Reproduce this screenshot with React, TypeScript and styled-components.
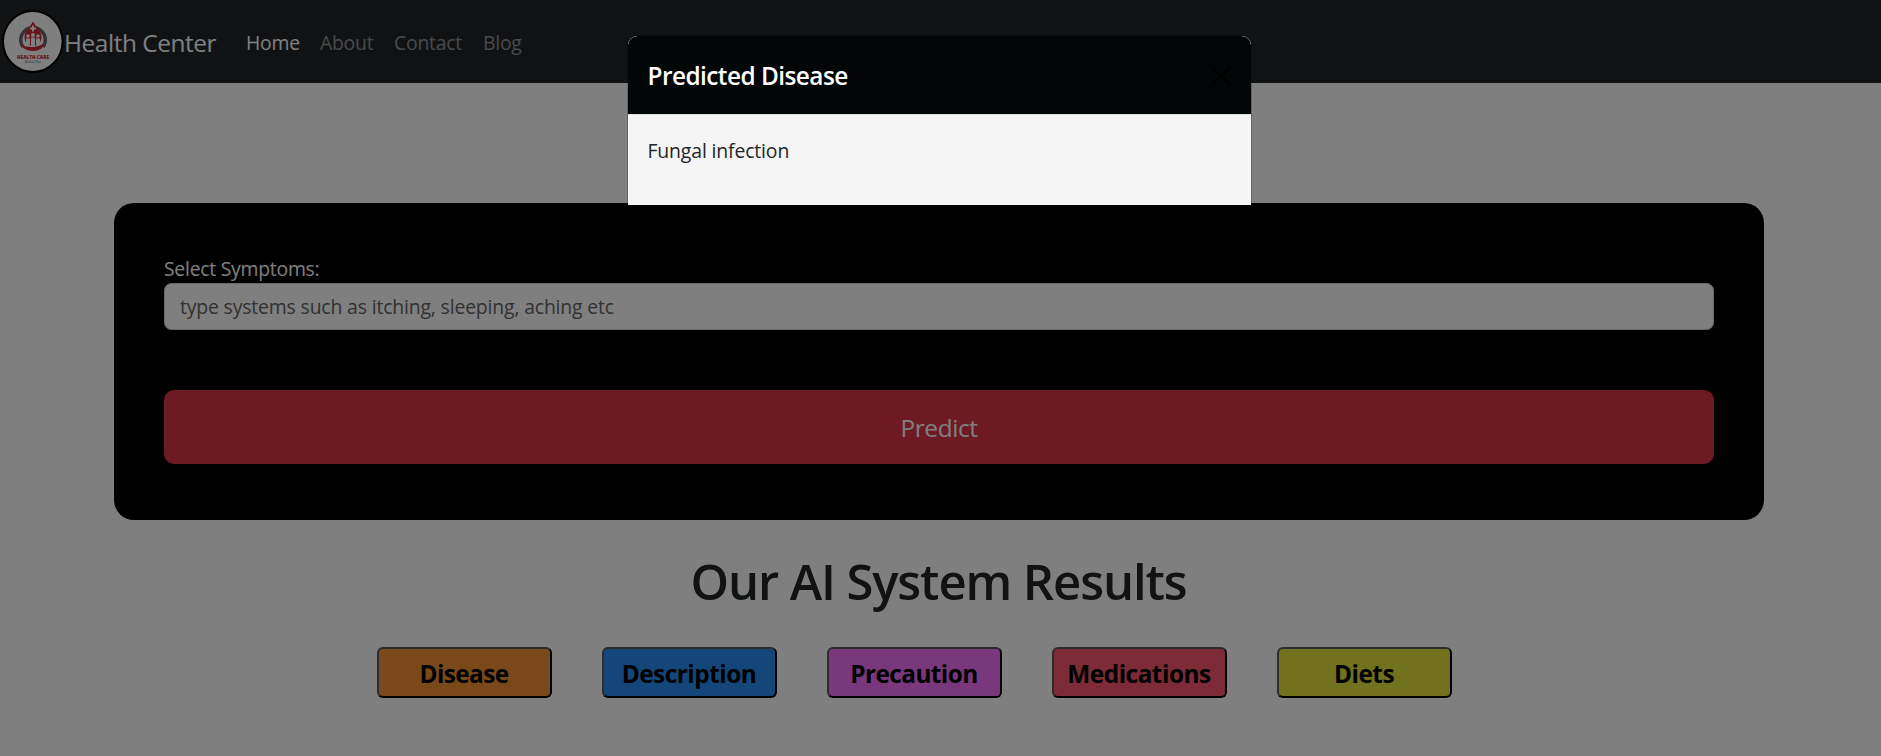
import React from "react";
import styled, { createGlobalStyle } from "styled-components";

const Global = createGlobalStyle`
  * { box-sizing: border-box; }
  html, body { margin: 0; height: 100%; overflow: hidden; }
  body { background: #fff; color: #212529; font-family: "Open Sans", "Noto Sans", sans-serif; font-size: 19.4px; line-height: 30px; }
`;

const Page = styled.div`
  position: relative;
  height: 756px;
  display: flex;
  flex-direction: column;
  overflow: hidden;
`;

const Navbar = styled.nav`
  height: 83px;
  flex: none;
  background: #212529;
  display: flex;
  align-items: center;
  padding: 2px 0 0 2px;
`;

const Logo = styled.svg`
  width: 62px;
  height: 63px;
  margin-bottom: 3px;
  display: block;
`;

const Brand = styled.span`
  margin-top: 1px;
  width: 182px;
  white-space: nowrap;
  color: #fff;
  font-size: 24.4px;
  letter-spacing: -0.43px;
`;

const NavLink = styled.a<{ $active?: boolean; $width: number }>`
  width: ${(p) => p.$width}px;
  margin-top: 1px;
  white-space: nowrap;
  color: ${(p) => (p.$active ? "#fff" : "rgba(255,255,255,.5)")};
  letter-spacing: -0.25px;
`;

const Card = styled.form`
  flex: none;
  width: 1650px;
  height: 317px;
  margin: 120px 0 0 114px;
  padding: 50px;
  border-radius: 20px;
  background: #000;
  display: flex;
  flex-direction: column;
`;

const Label = styled.label`
  color: #fff;
  height: 30px;
  line-height: 31px;
  letter-spacing: -0.26px;
`;

const Input = styled.input`
  height: 47px;
  border: 1px solid #ced4da;
  border-radius: 7.5px;
  padding: 0 15px 1px;
  background: #fff;
  font: inherit;
  letter-spacing: -0.16px;
  &::placeholder { color: #646464; opacity: 1; }
`;

const Submit = styled.button`
  margin-top: 60px;
  height: 74px;
  border: 0;
  border-radius: 10px;
  background: #dc3545;
  color: #fff;
  font: inherit;
  font-size: 24.4px;
  padding: 1px 0 0;
  letter-spacing: -0.4px;
`;

const Heading = styled.h1`
  margin: 30px 4px 0 0;
  height: 64px;
  text-align: center;
  font-size: 49px;
  line-height: 63px;
  font-weight: 600;
  letter-spacing: -1.1px;
  white-space: nowrap;
`;

const Results = styled.div`
  display: flex;
  gap: 50px;
  margin: 33px 0 0 377px;
`;

const ResultButton = styled.button<{ $color: string; $track: number }>`
  width: 175px;
  height: 51px;
  padding: 3px 1px 0 0;
  border: 2px solid;
  border-color: #585858 #000 #000 #585858;
  border-radius: 6px;
  background: ${(p) => p.$color};
  color: #000;
  font: inherit;
  font-size: 24.4px;
  font-weight: 700;
  letter-spacing: ${(p) => p.$track}px;
`;

const Backdrop = styled.div`
  position: absolute;
  inset: 0;
  background: rgba(0, 0, 0, 0.5);
`;

const Modal = styled.section`
  position: absolute;
  top: 36px;
  left: 628px;
  width: 623px;
  height: 169px;
  border-radius: 9px 9px 0 0;
  background: #f5f5f5;
  box-shadow: 0 0 0 1px rgba(0, 0, 0, 0.2);
  overflow: hidden;
`;

const ModalHeader = styled.header`
  height: 78px;
  padding: 2px 20px 0 19.5px;
  border-radius: 9.300px 9.300px 0 0;
  display: flex;
  align-items: center;
  justify-content: space-between;
  background: #020607;
  color: #fff;
`;

const ModalTitle = styled.h5`
  margin: 0;
  font-size: 24.4px;
  font-weight: 600;
  letter-spacing: -0.55px;
`;

const CloseIcon = styled.svg`
  width: 20px;
  height: 20px;
  display: block;
`;

const ModalBody = styled.div`
  border-top: 1px solid #dee2e6;
  padding: 21px 19.5px;
  letter-spacing: -0.14px;
`;

const links = [
  { label: "Home", width: 74, active: true },
  { label: "About", width: 74 },
  { label: "Contact", width: 89 },
  { label: "Blog", width: 60 },
];

const results = [
  { label: "Disease", color: "#f39334", track: -0.6 },
  { label: "Description", color: "#288cf2", track: -0.5 },
  { label: "Precaution", color: "#f370f9", track: -0.6 },
  { label: "Medications", color: "#fa576c", track: -0.5 },
  { label: "Diets", color: "#e2e23c", track: -0.5 },
];

function HealthLogo() {
  return (
    <Logo viewBox="0 0 62 63">
      <ellipse cx="30.800" cy="31.5" rx="29.800" ry="30.5" fill="#fff" stroke="#000" strokeWidth="2" />
      <path d="M21 37a12.300 12.300 0 1 1 20 0" fill="none" stroke="#666" strokeWidth="3.4" />
      <path d="M31 11.500c2.500 5 8.500 9 8.500 16a8.500 8.500 0 0 1-17 0c0-7 6-11 8.500-16z" fill="#d0283a" />
      <path d="M18 34.500q7 3 13 2.500 7-.5 11-4-1 8-11 8-9 0-13-6.500z" fill="#d0283a" />
      <path d="M31 15.500v6M28 18.500h6" stroke="#fff" strokeWidth="2" />
      <g fill="#fff">
        <circle cx="31" cy="25" r="2" />
        <circle cx="26" cy="26" r="1.700" />
        <circle cx="36" cy="26" r="1.700" />
        <path d="M29 27.500h4v9h-4zM24 28.500h4v6l-2 1-2-3zM34 28.500h4v4l-2 3-2-1z" />
      </g>
      <text x="31" y="48.500" textAnchor="middle" fontSize="5.400" fontWeight="800" fill="#d0283a" textLength="32" lengthAdjust="spacingAndGlyphs">HEALTH CARE</text>
      <text x="31" y="52.500" textAnchor="middle" fontSize="2.800" fill="#555" textLength="16" lengthAdjust="spacingAndGlyphs">Medical Plan</text>
    </Logo>
  );
}

export default function App() {
  return (
    <Page>
      <Global />
      <Navbar>
        <HealthLogo />
        <Brand>Health Center</Brand>
        {links.map((l) => (
          <NavLink key={l.label} $active={l.active} $width={l.width}>{l.label}</NavLink>
        ))}
      </Navbar>
      <Card>
        <Label htmlFor="symptoms">Select Symptoms:</Label>
        <Input id="symptoms" placeholder="type systems such as itching, sleeping, aching etc" />
        <Submit type="button">Predict</Submit>
      </Card>
      <Heading>Our AI System Results</Heading>
      <Results>
        {results.map((r) => (
          <ResultButton key={r.label} $color={r.color} $track={r.track}>{r.label}</ResultButton>
        ))}
      </Results>
      <Backdrop />
      <Modal role="dialog">
        <ModalHeader>
          <ModalTitle>Predicted Disease</ModalTitle>
          <CloseIcon viewBox="0 0 20 20">
            <path d="M1.500 1.500l17 17M18.500 1.500l-17 17" stroke="#000" strokeWidth="2" />
          </CloseIcon>
        </ModalHeader>
        <ModalBody>Fungal infection</ModalBody>
      </Modal>
    </Page>
  );
}
